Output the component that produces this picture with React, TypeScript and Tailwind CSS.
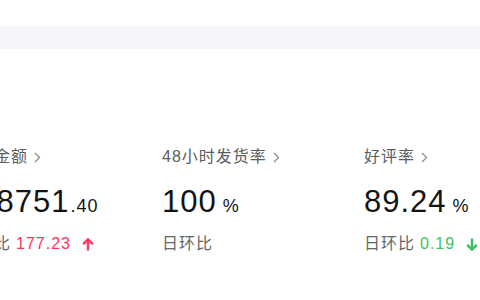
import React from 'react';

const font = { fontFamily: '"Liberation Sans", "Noto Sans CJK SC", sans-serif' };

type Trend = 'up' | 'down' | null;

const stats: { label: string; main: string; small: string; change: string; trend: Trend }[] = [
    { label: '支付金额', main: '128751', small: '.40', change: '177.23', trend: 'up' },
    { label: '48小时发货率', main: '100', small: '%', change: '', trend: null },
    { label: '好评率', main: '89.24', small: '%', change: '0.19', trend: 'down' },
];

const Chevron = () => (
    <svg width="7" height="11" viewBox="0 0 7 11" className="ml-[6px]">
        <path d="M1 1 L5.5 5.5 L1 10" fill="none" stroke="#8c8c8c" strokeWidth="1.3" />
    </svg>
);

const Arrow = ({ dir }: { dir: 'up' | 'down' }) => {
    const color = dir === 'up' ? '#ff3358' : '#35c25c';
    return (
        <svg width="12" height="13" viewBox="0 0 12 13" className="ml-[11px]">
            {dir === 'up' ? (
                <>
                    <path d="M6 2 V12.5" stroke={color} strokeWidth="2.4" />
                    <path d="M1.2 6.2 L6 1.4 L10.8 6.2" fill="none" stroke={color} strokeWidth="2.4" />
                </>
            ) : (
                <>
                    <path d="M6 0.5 V11" stroke={color} strokeWidth="2.4" />
                    <path d="M1.2 6.8 L6 11.6 L10.8 6.8" fill="none" stroke={color} strokeWidth="2.4" />
                </>
            )}
        </svg>
    );
};

const App = () => {
    return (
        <div className="w-[480px] h-[300px] bg-white overflow-hidden" style={font}>
            <div className="h-[26px]" />
            <div className="h-[23px] bg-[#f5f5f9]" />
            <div className="flex -ml-[40px] pt-[97px]">
                {stats.map((s) => (
                    <div key={s.label} className="w-[202px] shrink-0">
                        <div className="flex items-center h-[22px] text-[16px] leading-[22px] tracking-[1px] text-[#5c5c5c]">
                            {s.label}
                            <Chevron />
                        </div>
                        <div className="flex items-baseline mt-[18px] text-[#141414]">
                            <span className="text-[31px] leading-[31px] tracking-[1px]">{s.main}</span>
                            <span className={`text-[18px] leading-[31px] tracking-[1px] ${s.small === '%' ? 'ml-[6px]' : 'ml-[1px]'}`}>{s.small}</span>
                        </div>
                        <div className="flex items-center h-[22px] mt-[11px] text-[16px] leading-[22px] tracking-[1px] text-[#666666]">
                            日环比
                            {s.change && (
                                <span className={`ml-[5px] ${s.trend === 'up' ? 'text-[#ff3358]' : 'text-[#3cc562]'}`}>{s.change}</span>
                            )}
                            {s.trend && <Arrow dir={s.trend} />}
                        </div>
                    </div>
                ))}
            </div>
        </div>
    );
};

export default App;
